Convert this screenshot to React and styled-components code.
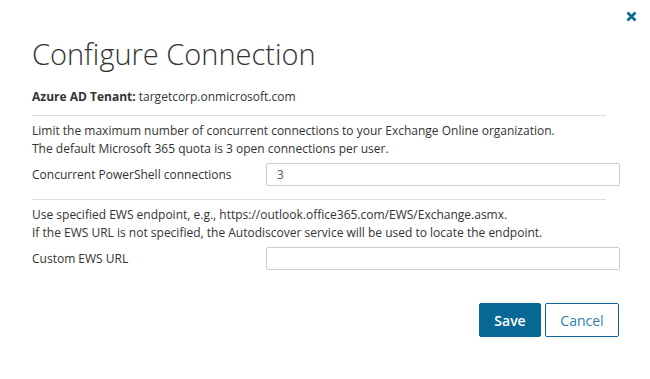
import React from "react";
import styled, { createGlobalStyle } from "styled-components";

const GlobalStyle = createGlobalStyle`
  body {
    margin: 0;
    background: #ffffff;
    font-family: "Open Sans", "Noto Sans", sans-serif;
    color: #333333;
  }
`;

const Dialog = styled.div`
  width: 650px;
  height: 379px;
  box-sizing: border-box;
  padding: 9px 30px 0 32px;
  display: flex;
  flex-direction: column;
  background: #fff;
`;

const TopBar = styled.div`
  display: flex;
  justify-content: flex-end;
  margin-right: -18px;
  height: 17px;
`;

const CloseButton = styled.button`
  border: none;
  background: none;
  padding: 0;
  width: 14px;
  height: 14px;
  cursor: pointer;
  display: flex;
  align-items: center;
  justify-content: center;
`;

const Title = styled.h1`
  margin: 8px 0 0;
  font-size: 29px;
  font-weight: 300;
  line-height: 40px;
  color: #333;
`;

const TenantLine = styled.p`
  margin: 14px 0 0;
  font-size: 12px;
  line-height: 18px;
  & b {
    font-weight: 700;
  }
`;

const Divider = styled.hr`
  border: none;
  border-top: 1px solid #dddddd;
  margin: ${(p) => p.$top}px 14px 0 0;
`;

const Note = styled.p`
  margin: 6px 0 0;
  font-size: 12px;
  line-height: 18px;
`;

const FieldRow = styled.div`
  display: grid;
  grid-template-columns: 234px 1fr;
  align-items: center;
  margin-top: 5px;
`;

const Label = styled.label`
  font-size: 12px;
`;

const Input = styled.input`
  height: 23px;
  box-sizing: border-box;
  border: 1px solid #cccccc;
  border-radius: 2px;
  padding: 0 10px;
  font-family: inherit;
  font-size: 12px;
  color: #555;
  outline: none;
`;

const Footer = styled.div`
  display: flex;
  justify-content: flex-end;
  gap: 4px;
  margin-top: 33px;
  padding-right: 1px;
`;

const Button = styled.button`
  height: 34px;
  box-sizing: border-box;
  padding: 0;
  border-radius: 2px;
  font-family: inherit;
  font-size: 14px;
  cursor: pointer;
  border: 1px solid #096996;
  background: ${(p) => (p.$primary ? "#096996" : "#ffffff")};
  color: ${(p) => (p.$primary ? "#ffffff" : "#2f7fae")};
  font-weight: ${(p) => (p.$primary ? 600 : 400)};
  width: ${(p) => (p.$primary ? 62 : 74)}px;
`;

const App = () => {
  return (
    <>
      <GlobalStyle />
      <Dialog>
        <TopBar>
          <CloseButton aria-label="Close">
            <svg width="11" height="11" viewBox="0 0 11 11">
              <path
                d="M1.5 1.5 L9.5 9.5 M9.5 1.5 L1.5 9.5"
                stroke="#096996"
                strokeWidth="2.6"
                strokeLinecap="butt"
              />
            </svg>
          </CloseButton>
        </TopBar>
        <Title>Configure Connection</Title>
        <TenantLine>
          <b>Azure AD Tenant:</b> targetcorp.onmicrosoft.com
        </TenantLine>
        <Divider $top={9} />
        <Note>
          Limit the maximum number of concurrent connections to your Exchange Online organization.
          <br />
          The default Microsoft 365 quota is 3 open connections per user.
        </Note>
        <FieldRow>
          <Label>Concurrent PowerShell connections</Label>
          <Input defaultValue="3" />
        </FieldRow>
        <Divider $top={13} />
        <Note>
          Use specified EWS endpoint, e.g., https://outlook.office365.com/EWS/Exchange.asmx.
          <br />
          If the EWS URL is not specified, the Autodiscover service will be used to locate the endpoint.
        </Note>
        <FieldRow>
          <Label>Custom EWS URL</Label>
          <Input defaultValue="" />
        </FieldRow>
        <Footer>
          <Button $primary>Save</Button>
          <Button>Cancel</Button>
        </Footer>
      </Dialog>
    </>
  );
};

export default App;
